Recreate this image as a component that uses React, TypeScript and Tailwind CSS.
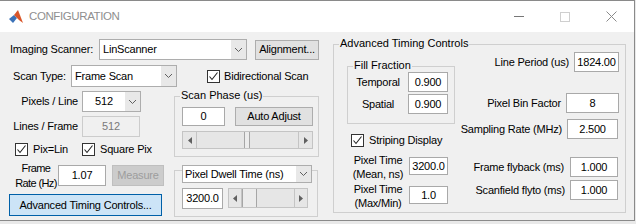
import type { ReactNode } from "react";

function Chevron() {
  return (
    <svg width="9" height="6" viewBox="0 0 9 6">
      <polyline points="1,1 4.5,4.5 8,1" fill="none" stroke="#606060" strokeWidth="1" />
    </svg>
  );
}

function Check() {
  return (
    <div className="flex h-[13px] w-[13px] items-center justify-center border border-[#333] bg-white">
      <svg width="11" height="11" viewBox="0 0 11 11">
        <polyline points="1.5,5.5 4,8.5 9.5,1.5" fill="none" stroke="#222" strokeWidth="1.1" />
      </svg>
    </div>
  );
}

function Arrow({ dir }: { dir: "l" | "r" }) {
  return (
    <svg width="4" height="7" viewBox="0 0 4 7">
      <polygon points={dir === "l" ? "4,0 0,3.5 4,7" : "0,0 4,3.5 0,7"} fill="#606060" />
    </svg>
  );
}

function Group({ label, className, children }: { label?: string; className: string; children?: ReactNode }) {
  return (
    <div className={`relative border border-[#cfcfcf] ${className}`}>
      {label ? (
        <span className="absolute left-[5px] top-[-9px] bg-[#f0f0f0] px-[1px] leading-[14px] tracking-normal">{label}</span>
      ) : null}
      {children}
    </div>
  );
}

export default function App() {
  return (
    <div className="h-[224px] w-[636px] overflow-hidden bg-[#e9e9e9] font-['Liberation_Sans',Arial,sans-serif] text-[11px] tracking-[-0.2px] text-black">
      <div className="flex h-[221px] w-[635px] flex-col border-r border-t border-b border-[#8a8a8a] bg-[#f0f0f0]">
        {/* title bar */}
        <div className="flex h-[31px] items-center bg-white">
          <svg className="ml-[8px]" width="16" height="16" viewBox="0 0 16 16">
            <polygon points="1,10 6,6 9,9 5,14" fill="#3c72b8" />
            <polygon points="6,6 10,1 15,14 11,11 9,9" fill="#d9552a" />
            <polygon points="10,1 12,6 15,14" fill="#f3a23d" />
          </svg>
          <span className="ml-[5px] text-[11.5px] tracking-[-0.4px] text-[#8f8f8f]">CONFIGURATION</span>
          <div className="ml-auto flex h-full">
            <div className="flex w-[46px] items-center justify-center">
              <div className="h-px w-[10px] bg-[#777]" />
            </div>
            <div className="flex w-[46px] items-center justify-center">
              <div className="h-[10px] w-[10px] border border-[#cfcfcf]" />
            </div>
            <div className="flex w-[46px] items-center justify-center">
              <svg width="11" height="11" viewBox="0 0 11 11">
                <path d="M0.5 0.5 L10.5 10.5 M10.5 0.5 L0.5 10.5" stroke="#8a8a8a" strokeWidth="1" />
              </svg>
            </div>
          </div>
        </div>

        {/* content */}
        <div className="flex flex-1 items-start">
          <div className="flex w-[322px] flex-col">
            <div className="mt-[7px] flex h-[21px] items-center">
              <span className="w-[99px] pl-[10px]">Imaging Scanner:</span>
              <div className="flex h-[21px] w-[148px] items-center border border-[#adadad] bg-white">
                <span className="flex-1 pl-[3px]">LinScanner</span>
                <div className="flex h-full w-[15px] items-center justify-center bg-[#e8e8e8]">
                  <Chevron />
                </div>
              </div>
              <button className="ml-[8px] h-[20px] w-[64px] border border-[#adadad] bg-[#e1e1e1]">Alignment...</button>
            </div>

            <div className="mt-[5px] flex h-[22px] items-center">
              <span className="w-[71px] pl-[13px]">Scan Type:</span>
              <div className="flex h-[22px] w-[106px] items-center border border-[#adadad] bg-white">
                <span className="flex-1 pl-[3px]">Frame Scan</span>
                <div className="flex h-full w-[15px] items-center justify-center bg-[#e8e8e8]">
                  <Chevron />
                </div>
              </div>
              <div className="ml-[30px] flex items-center">
                <Check />
                <span className="ml-[4px]">Bidirectional Scan</span>
              </div>
            </div>

            <div className="mt-[4px] flex items-start">
              <div className="flex w-[174px] flex-col">
                <div className="flex h-[21px] items-center">
                  <span className="w-[82px] pr-[4px] text-right">Pixels / Line</span>
                  <div className="flex h-[21px] w-[59px] items-center border border-[#adadad] bg-white">
                    <span className="flex-1 text-center">512</span>
                    <div className="flex h-full w-[15px] items-center justify-center bg-[#e8e8e8]">
                      <Chevron />
                    </div>
                  </div>
                </div>
                <div className="mt-[4px] flex h-[21px] items-center">
                  <span className="w-[82px] pr-[4px] text-right">Lines / Frame</span>
                  <div className="flex h-[21px] w-[58px] items-center justify-center border border-[#cccccc] bg-[#f0f0f0] text-[#7a7a7a]">
                    512
                  </div>
                </div>
                <div className="mt-[6px] flex h-[13px] items-center">
                  <div className="flex w-[82px] items-center pl-[15px]">
                    <Check />
                    <span className="ml-[5px]">Pix=Lin</span>
                  </div>
                  <Check />
                  <span className="ml-[5px]">Square Pix</span>
                </div>
                <div className="mt-[9px] flex h-[21px] items-center">
                  <div className="ml-[14px] flex w-[44px] flex-col items-center whitespace-nowrap leading-[15px] tracking-[-0.6px]">
                    <span>Frame</span>
                    <span>Rate (Hz)</span>
                  </div>
                  <div className="flex h-[21px] w-[48px] items-center justify-center border border-[#a9a9a9] bg-white">1.07</div>
                  <button className="ml-[6px] h-[21px] w-[52px] border border-[#bfbfbf] bg-[#cccccc] text-[#9d9d9d]">Measure</button>
                </div>
                <button className="ml-[9px] mt-[8px] h-[22px] w-[153px] border border-[#0060a8] bg-[#cce4f7]">
                  Advanced Timing Controls...
                </button>
              </div>

              <div className="flex w-[145px] flex-col">
                <Group label="Scan Phase (us)" className="mt-[5px] h-[61px] w-[145px] pl-[7px] pt-[10px]">
                  <div className="flex">
                    <div className="flex h-[19px] w-[43px] items-center justify-center border border-[#a9a9a9] bg-white">0</div>
                    <button className="ml-[10px] h-[19px] w-[78px] border border-[#adadad] bg-[#e1e1e1]">Auto Adjust</button>
                  </div>
                  <div className="mt-[5px] flex h-[18px] w-[131px] border border-[#c4c4c4] bg-[#e6e6e6]">
                    <div className="flex w-[14px] items-center justify-center border-r border-[#c4c4c4]">
                      <Arrow dir="l" />
                    </div>
                    <div className="flex flex-1">
                      <div className="ml-[47px] w-[6px] border-x border-[#a6a6a6] bg-[#ececec]" />
                    </div>
                    <div className="flex w-[14px] items-center justify-center border-l border-[#c4c4c4]">
                      <Arrow dir="r" />
                    </div>
                  </div>
                </Group>
                <Group className="mt-[13px] h-[47px] w-[144px] pl-[7px]">
                  <div className="mt-[-6px] flex h-[18px] w-[130px] items-center border border-[#adadad] bg-white">
                    <span className="flex-1 pl-[2px]">Pixel Dwell Time (ns)</span>
                    <div className="flex h-full w-[15px] items-center justify-center bg-[#e8e8e8]">
                      <Chevron />
                    </div>
                  </div>
                  <div className="mt-[5px] flex">
                    <div className="flex h-[21px] w-[41px] items-center justify-center border border-[#a9a9a9] bg-white">3200.0</div>
                    <div className="ml-[5px] flex h-[20px] w-[80px] border border-[#c4c4c4] bg-[#e6e6e6]">
                      <div className="flex w-[13px] items-center justify-center border-r border-[#c4c4c4]">
                        <Arrow dir="l" />
                      </div>
                      <div className="flex flex-1">
                        <div className="w-[15px] border-x border-[#a6a6a6] bg-[#ececec]" />
                      </div>
                      <div className="flex w-[13px] items-center justify-center border-l border-[#c4c4c4]">
                        <Arrow dir="r" />
                      </div>
                    </div>
                  </div>
                </Group>
              </div>
            </div>
          </div>

          <Group label="Advanced Timing Controls" className="ml-[11px] mt-[12px] flex h-[169px] w-[293px]">
            <div className="flex flex-col pl-[13px] pt-[21px]">
              <Group label="Fill Fraction" className="h-[59px] w-[108px] pt-[5px]">
                <div className="flex h-[20px] items-center">
                  <span className="w-[60px] text-center">Temporal</span>
                  <div className="flex h-[20px] w-[40px] items-center justify-center border border-[#a9a9a9] bg-white">0.900</div>
                </div>
                <div className="mt-[2px] flex h-[20px] items-center">
                  <span className="w-[60px] text-center">Spatial</span>
                  <div className="flex h-[20px] w-[40px] items-center justify-center border border-[#a9a9a9] bg-white">0.900</div>
                </div>
              </Group>
              <div className="ml-[4px] mt-[8px] flex items-center">
                <Check />
                <span className="ml-[5px]">Striping Display</span>
              </div>
              <div className="mt-[8px] flex h-[26px] items-start">
                <span className="mt-[-4px] w-[62px] text-center leading-[14px]">
                  Pixel Time
                  <br />
                  (Mean, ns)
                </span>
                <div className="flex h-[18px] w-[39px] items-center justify-center border border-[#a9a9a9] bg-white">3200.0</div>
              </div>
              <div className="mt-[4px] flex h-[26px] items-start">
                <span className="mt-[-4px] w-[62px] text-center leading-[14px]">
                  Pixel Time
                  <br />
                  (Max/Min)
                </span>
                <div className="flex h-[18px] w-[39px] items-center justify-center border border-[#a9a9a9] bg-white">1.0</div>
              </div>
            </div>

            <div className="ml-auto flex flex-col items-end pr-[6px]">
              <div className="mt-[7px] flex h-[20px] items-center gap-[5px]">
                <span>Line Period (us)</span>
                <div className="flex h-[20px] w-[45px] items-center justify-center border border-[#a9a9a9] bg-white">1824.00</div>
              </div>
              <div className="mt-[21px] flex h-[20px] items-center gap-[5px]">
                <span>Pixel Bin Factor</span>
                <div className="flex h-[20px] w-[53px] items-center justify-center border border-[#a9a9a9] bg-white">8</div>
              </div>
              <div className="mt-[6px] flex h-[20px] items-center gap-[5px] pr-[1px]">
                <span>Sampling Rate (MHz)</span>
                <div className="flex h-[20px] w-[51px] items-center justify-center border border-[#a9a9a9] bg-white">2.500</div>
              </div>
              <div className="mt-[18px] flex h-[20px] items-center gap-[6px] pr-[1px]">
                <span>Frame flyback (ms)</span>
                <div className="flex h-[20px] w-[48px] items-center justify-center border border-[#a9a9a9] bg-white">1.000</div>
              </div>
              <div className="mt-[3px] flex h-[20px] items-center gap-[5px] pr-[1px]">
                <span>Scanfield flyto (ms)</span>
                <div className="flex h-[20px] w-[48px] items-center justify-center border border-[#a9a9a9] bg-white">1.000</div>
              </div>
            </div>
          </Group>
        </div>
      </div>
    </div>
  );
}
